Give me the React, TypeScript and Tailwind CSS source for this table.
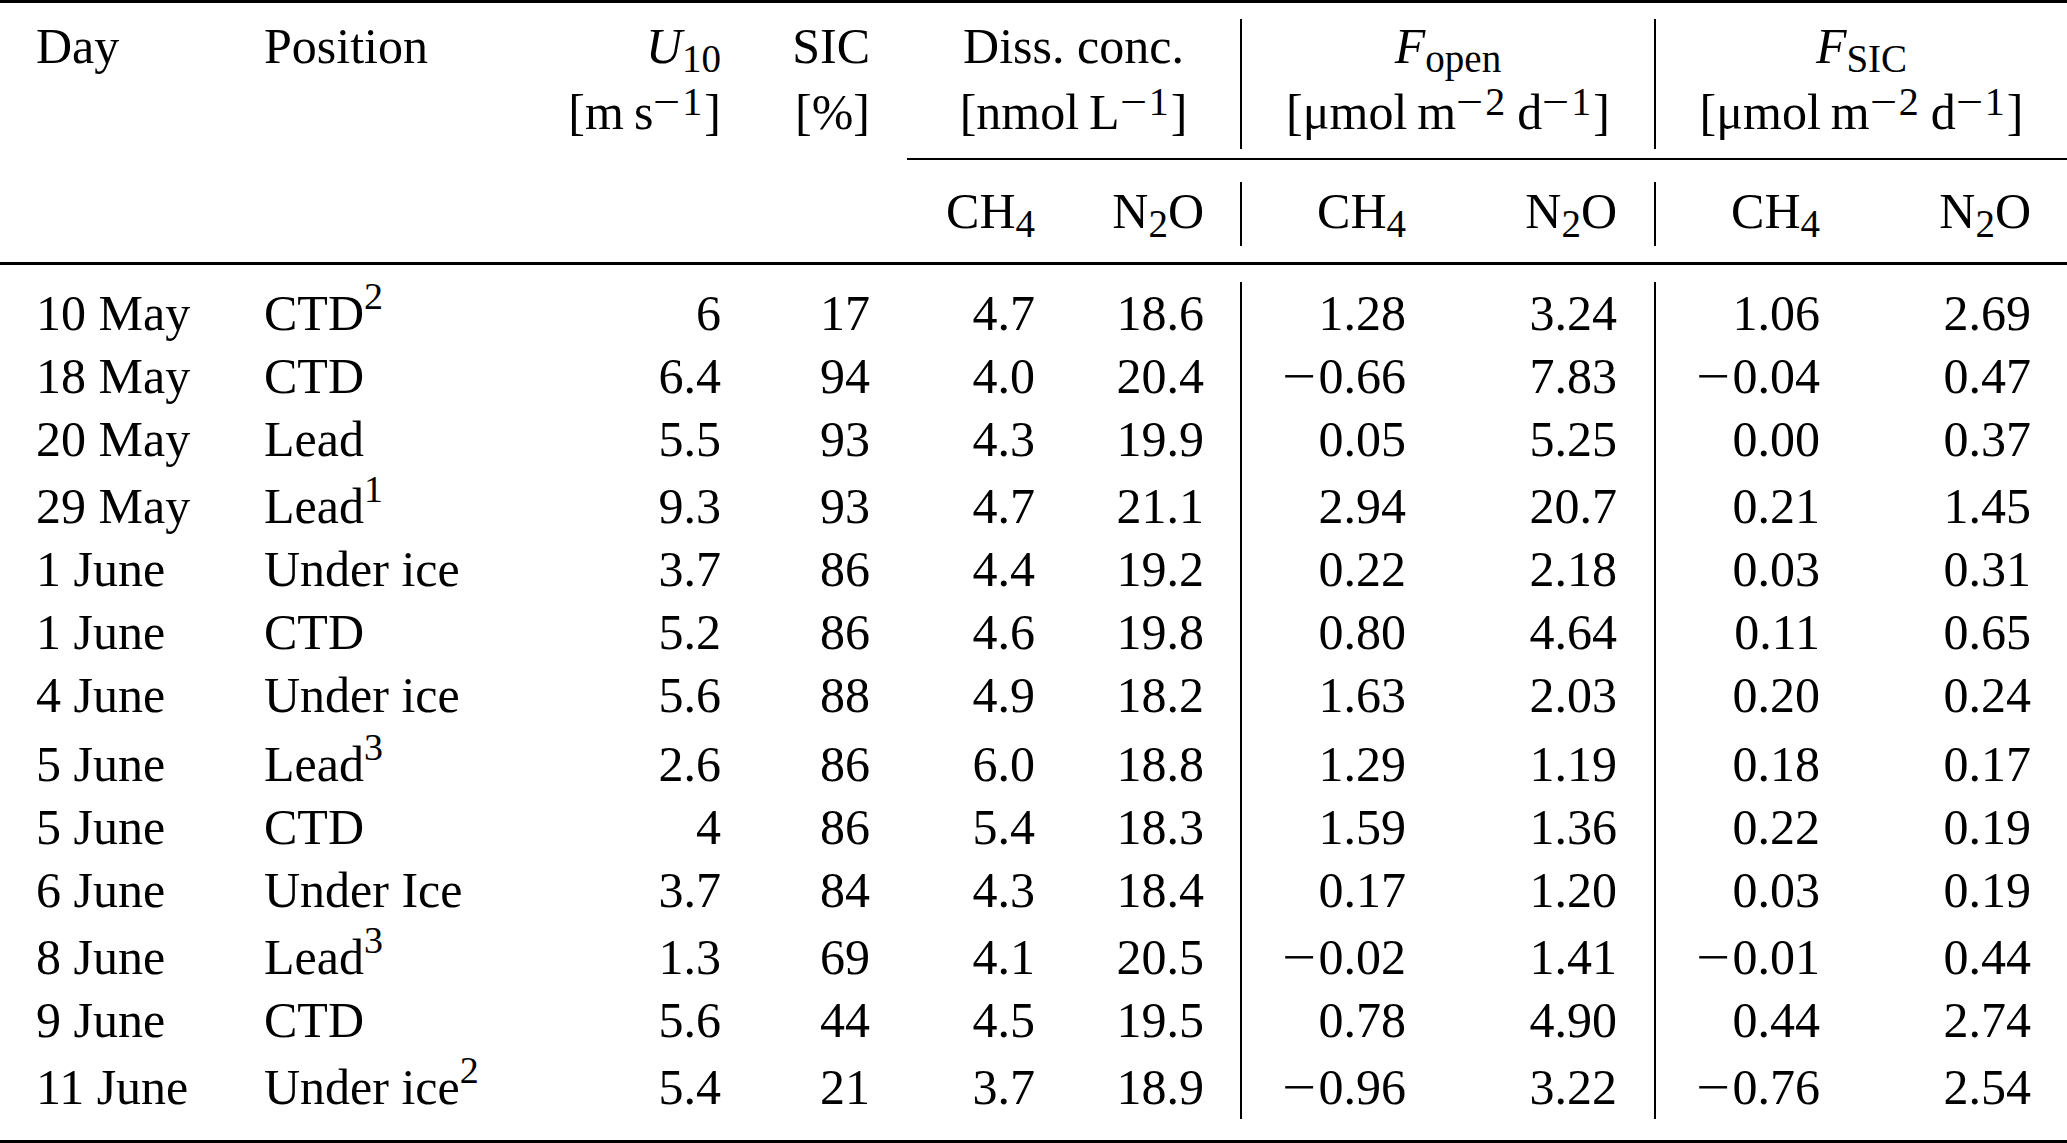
import type { ReactNode } from "react";

const cols =
  "grid grid-cols-[264px_296px_161px_149px_165px_169px_36px_2px_164px_211px_37px_2px_164px_211px_36px]";

type Row = {
  day: string;
  pos: string;
  note?: number;
  pad: string;
  vals: string[];
};

const rows: Row[] = [
  { day: "10 May", pos: "CTD", note: 2, pad: "", vals: ["6", "17", "4.7", "18.6", "1.28", "3.24", "1.06", "2.69"] },
  { day: "18 May", pos: "CTD", pad: "", vals: ["6.4", "94", "4.0", "20.4", "−0.66", "7.83", "−0.04", "0.47"] },
  { day: "20 May", pos: "Lead", pad: "", vals: ["5.5", "93", "4.3", "19.9", "0.05", "5.25", "0.00", "0.37"] },
  { day: "29 May", pos: "Lead", note: 1, pad: "pt-[4px]", vals: ["9.3", "93", "4.7", "21.1", "2.94", "20.7", "0.21", "1.45"] },
  { day: "1 June", pos: "Under ice", pad: "", vals: ["3.7", "86", "4.4", "19.2", "0.22", "2.18", "0.03", "0.31"] },
  { day: "1 June", pos: "CTD", pad: "", vals: ["5.2", "86", "4.6", "19.8", "0.80", "4.64", "0.11", "0.65"] },
  { day: "4 June", pos: "Under ice", pad: "", vals: ["5.6", "88", "4.9", "18.2", "1.63", "2.03", "0.20", "0.24"] },
  { day: "5 June", pos: "Lead", note: 3, pad: "pt-[6px]", vals: ["2.6", "86", "6.0", "18.8", "1.29", "1.19", "0.18", "0.17"] },
  { day: "5 June", pos: "CTD", pad: "", vals: ["4", "86", "5.4", "18.3", "1.59", "1.36", "0.22", "0.19"] },
  { day: "6 June", pos: "Under Ice", pad: "", vals: ["3.7", "84", "4.3", "18.4", "0.17", "1.20", "0.03", "0.19"] },
  { day: "8 June", pos: "Lead", note: 3, pad: "pt-[4px]", vals: ["1.3", "69", "4.1", "20.5", "−0.02", "1.41", "−0.01", "0.44"] },
  { day: "9 June", pos: "CTD", pad: "", vals: ["5.6", "44", "4.5", "19.5", "0.78", "4.90", "0.44", "2.74"] },
  { day: "11 June", pos: "Under ice", note: 2, pad: "pt-[4px]", vals: ["5.4", "21", "3.7", "18.9", "−0.96", "3.22", "−0.76", "2.54"] },
];

// TeX's math minus is longer than the font's own glyph
function Minus({ small }: { small?: boolean }) {
  return (
    <span className={`inline-block text-left ${small ? "w-[29px]" : "w-[37px]"}`}>
      <span className="inline-block origin-left scale-x-[1.2]">−</span>
    </span>
  );
}

function withMinus(s: string, small?: boolean) {
  if (s.startsWith("−")) {
    return (
      <>
        <Minus small={small} />
        {s.slice(1)}
      </>
    );
  }
  return s;
}

function Sub({ children }: { children: ReactNode }) {
  return <span className="relative top-[9px] text-[39px] leading-[0]">{children}</span>;
}

// superscript in a unit, sits lower than a footnote mark
function Pow({ v }: { v: string }) {
  return <span className="relative -top-[14px] mr-[2px] text-[40px] leading-[0]">{withMinus(v, true)}</span>;
}

function Note({ children }: { children: ReactNode }) {
  return <span className="relative -top-[21px] text-[38px] leading-[0]">{children}</span>;
}

function Thin() {
  return <span className="inline-block w-[10px]" />;
}

function Num({ v, pad }: { v: string; pad: string }) {
  return <div className={`${pad} text-right leading-[63px] whitespace-nowrap`}>{withMinus(v)}</div>;
}

function Flux({ sub }: { sub: string }) {
  return (
    <div className="col-span-3 pt-[10px] text-center">
      <div>
        <span className="italic">F</span>
        <Sub>{sub}</Sub>
      </div>
      <div>
        [μmol
        <Thin />m<Pow v="−2" />
        <Thin />d<Pow v="−1" />]
      </div>
    </div>
  );
}

function HeadRule({ h, pt }: { h: string; pt: string }) {
  return (
    <div className={pt}>
      <div className={`${h} w-[2px] bg-black`} />
    </div>
  );
}

export default function App() {
  return (
    <div className="flex h-[1143px] w-[2067px] flex-col bg-white font-['Liberation_Serif',serif] text-[50px] text-black">
      <div className="h-[3px] bg-black" />

      {/* header, first band */}
      <div className={`${cols} h-[155px] whitespace-nowrap leading-[66px]`}>
        <div className="pl-[36px] pt-[10px]">Day</div>
        <div className="pt-[10px]">Position</div>
        <div className="pt-[10px] text-right">
          <div>
            <span className="italic">U</span>
            <Sub>10</Sub>
          </div>
          <div>
            [m
            <Thin />s<Pow v="−1" />]
          </div>
        </div>
        <div className="pt-[10px] text-right">
          <div>SIC</div>
          <div>[%]</div>
        </div>
        <div className="col-span-3 pl-[37px] pt-[10px] text-center">
          <div>Diss. conc.</div>
          <div>
            [nmol
            <Thin />L<Pow v="−1" />]
          </div>
        </div>
        <HeadRule pt="pt-[16px]" h="h-[130px]" />
        <Flux sub="open" />
        <HeadRule pt="pt-[16px]" h="h-[130px]" />
        <Flux sub="SIC" />
      </div>

      <div className="ml-[907px] h-[2px] bg-black" />

      {/* header, second band */}
      <div className={`${cols} h-[102px] whitespace-nowrap leading-[63px]`}>
        <div className="col-span-4" />
        <div className="pt-[20px] text-right">
          CH<Sub>4</Sub>
        </div>
        <div className="pt-[20px] text-right">
          N<Sub>2</Sub>O
        </div>
        <div />
        <HeadRule pt="pt-[22px]" h="h-[64px]" />
        <div className="pt-[20px] text-right">
          CH<Sub>4</Sub>
        </div>
        <div className="pt-[20px] text-right">
          N<Sub>2</Sub>O
        </div>
        <div />
        <HeadRule pt="pt-[22px]" h="h-[64px]" />
        <div className="pt-[20px] text-right">
          CH<Sub>4</Sub>
        </div>
        <div className="pt-[20px] text-right">
          N<Sub>2</Sub>O
        </div>
        <div />
      </div>

      <div className="h-[3px] bg-black" />

      {/* body */}
      <div className={`${cols} pt-[17px]`}>
        {rows.map((r, i) => (
          <div key={i} className="contents">
            <div className={`${r.pad} pl-[36px] leading-[63px] whitespace-nowrap`}>{r.day}</div>
            <div className={`${r.pad} leading-[63px] whitespace-nowrap`}>
              {r.pos}
              {r.note ? <Note>{r.note}</Note> : null}
            </div>
            <Num v={r.vals[0]} pad={r.pad} />
            <Num v={r.vals[1]} pad={r.pad} />
            <Num v={r.vals[2]} pad={r.pad} />
            <Num v={r.vals[3]} pad={r.pad} />
            <div />
            <div className="bg-black" />
            <Num v={r.vals[4]} pad={r.pad} />
            <Num v={r.vals[5]} pad={r.pad} />
            <div />
            <div className="bg-black" />
            <Num v={r.vals[6]} pad={r.pad} />
            <Num v={r.vals[7]} pad={r.pad} />
            <div />
          </div>
        ))}
      </div>

      <div className="flex-1" />
      <div className="h-[3px] bg-black" />
    </div>
  );
}
